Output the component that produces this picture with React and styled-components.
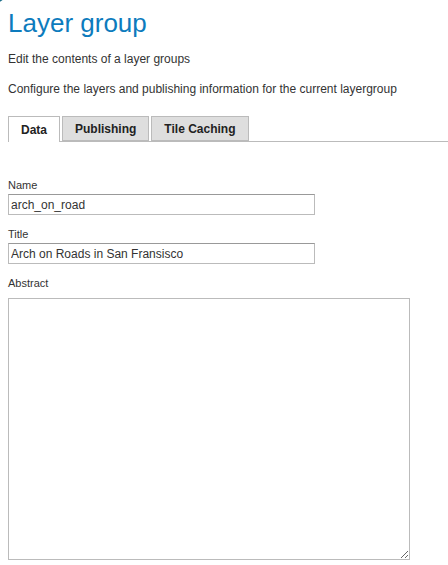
import React, { useState } from 'react';
import styled, { createGlobalStyle } from 'styled-components';

const GlobalStyle = createGlobalStyle`
  html, body {
    margin: 0;
    padding: 0;
    background: #fff;
  }
  body {
    font-family: "Liberation Sans", Arial, sans-serif;
    color: #333;
  }
`;

const Page = styled.div`
  position: relative;
  width: 448px;
  height: 565px;
  overflow: hidden;
  padding: 0 0 0 8px;
  box-sizing: border-box;
`;

const Corner = styled.div`
  position: absolute;
  top: -6px;
  left: -6px;
  width: 10px;
  height: 8px;
  border-radius: 0 0 6px 0;
  background: #1d6f8a;
`;

const Heading = styled.h1`
  margin: 0;
  padding-top: 8px;
  font-size: 26px;
  font-weight: normal;
  line-height: 30px;
  color: #0d7bbd;
`;

const Text = styled.p`
  margin: ${p => p.$top}px 0 0;
  font-size: 12px;
  line-height: 14px;
  color: #333;
`;

const TabBar = styled.div`
  display: flex;
  gap: 2px;
  margin-top: 20px;
  border-bottom: 1px solid #bbb;
  height: 25px;
`;

const Tab = styled.button`
  box-sizing: border-box;
  height: ${p => (p.$active ? '26px' : '25px')};
  padding: 0 12px;
  font-family: inherit;
  font-size: 12px;
  font-weight: bold;
  color: #222;
  background: ${p => (p.$active ? '#fff' : '#dedede')};
  border: 1px solid #bbb;
  border-bottom: ${p => (p.$active ? 'none' : '1px solid #bbb')};
  cursor: pointer;
`;

const Form = styled.div`
  display: flex;
  flex-direction: column;
  padding-top: 37px;
`;

const Label = styled.label`
  font-size: 11px;
  line-height: 13px;
  color: #333;
  margin-bottom: 2px;
`;

const Input = styled.input`
  box-sizing: border-box;
  width: 307px;
  height: 21px;
  margin-bottom: 13px;
  padding: 1px 2px;
  font-family: inherit;
  font-size: 12px;
  color: #333;
  border: 1px solid #bbb;
  border-top-color: #999;
  outline: none;
`;

const TextArea = styled.textarea`
  box-sizing: border-box;
  width: 402px;
  height: 262px;
  margin-top: 6px;
  font-family: inherit;
  font-size: 12px;
  border: 1px solid #bbb;
  outline: none;
`;

export default function App() {
  const [tab, setTab] = useState('Data');
  const [name, setName] = useState('arch_on_road');
  const [title, setTitle] = useState('Arch on Roads in San Fransisco');
  const [abs, setAbs] = useState('');

  return (
    <>
      <GlobalStyle />
      <Page>
        <Corner />
        <Heading>Layer group</Heading>
        <Text $top={14}>Edit the contents of a layer groups</Text>
        <Text $top={16}>Configure the layers and publishing information for the current layergroup</Text>
        <TabBar>
          {['Data', 'Publishing', 'Tile Caching'].map(t => (
            <Tab key={t} $active={tab === t} onClick={() => setTab(t)}>{t}</Tab>
          ))}
        </TabBar>
        <Form>
          <Label>Name</Label>
          <Input value={name} onChange={e => setName(e.target.value)} />
          <Label>Title</Label>
          <Input value={title} onChange={e => setTitle(e.target.value)} />
          <Label>Abstract</Label>
          <TextArea value={abs} onChange={e => setAbs(e.target.value)} />
        </Form>
      </Page>
    </>
  );
}
